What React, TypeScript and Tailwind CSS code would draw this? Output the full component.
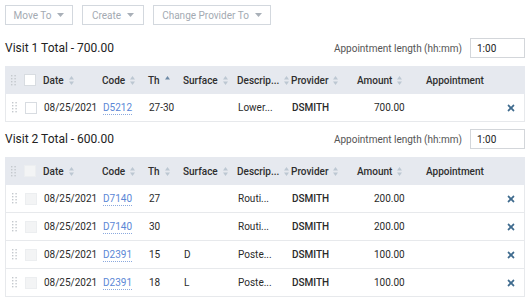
import { FC } from "react";
import { FaTimes } from "react-icons/fa";

interface Line {
  date: string;
  code: string;
  th: string;
  surface: string;
  desc: string;
  provider: string;
  amount: string;
}

const visits: { title: string; disabled: boolean; lines: Line[] }[] = [
  {
    title: "Visit 1 Total - 700.00",
    disabled: false,
    lines: [
      { date: "08/25/2021", code: "D5212", th: "27-30", surface: "", desc: "Lower...", provider: "DSMITH", amount: "700.00" },
    ],
  },
  {
    title: "Visit 2 Total - 600.00",
    disabled: true,
    lines: [
      { date: "08/25/2021", code: "D7140", th: "27", surface: "", desc: "Routi...", provider: "DSMITH", amount: "200.00" },
      { date: "08/25/2021", code: "D7140", th: "30", surface: "", desc: "Routi...", provider: "DSMITH", amount: "200.00" },
      { date: "08/25/2021", code: "D2391", th: "15", surface: "D", desc: "Poste...", provider: "DSMITH", amount: "100.00" },
      { date: "08/25/2021", code: "D2391", th: "18", surface: "L", desc: "Poste...", provider: "DSMITH", amount: "100.00" },
    ],
  },
];

const cols = "grid grid-cols-[15px_23px_59px_46px_35px_54px_54px_66px_69px_74px_25px]";

const Caret = () => (
  <svg width="7" height="4" viewBox="0 0 7 4" className="ml-[6px]">
    <path d="M0 0h7L3.5 4z" fill="#a9b0b8" />
  </svg>
);

const Sort: FC<{ active?: boolean }> = ({ active }) => (
  <svg width="5" height="9" viewBox="0 0 5 9" className="ml-[5px] mt-[1px]">
    <path d="M2.5 0L5 3.5H0z" fill={active ? "#6e8aa6" : "#bcc7d2"} />
    {!active && <path d="M0 5.5h5L2.5 9z" fill="#bcc7d2" />}
  </svg>
);

const Grip = () => (
  <svg width="5" height="11" viewBox="0 0 5 11" className="ml-[6px]">
    {[0, 3, 6, 9].map((y) => (
      <g key={y}>
        <rect x="0" y={y} width="1.4" height="1.4" fill="#c4c8cd" />
        <rect x="3.4" y={y} width="1.4" height="1.4" fill="#c4c8cd" />
      </g>
    ))}
  </svg>
);

const Box: FC<{ disabled?: boolean }> = ({ disabled }) => (
  <div
    className={`w-[12px] h-[12px] ml-[4px] border ${
      disabled ? "bg-[#f3f4f5] border-[#eceef0]" : "bg-white border-[#d8dce1]"
    }`}
  ></div>
);

const Head: FC<{ label: string; sort?: boolean; active?: boolean }> = ({ label, sort = true, active }) => (
  <div className="flex items-center">
    <span>{label}</span>
    {sort && <Sort active={active} />}
  </div>
);

const Button: FC<{ label: string; w: string }> = ({ label, w }) => (
  <div className={`${w} h-[20px] flex items-center justify-center border border-[#d3d8de] text-[10px] text-[#a3aab2]`}>
    {label}
    <Caret />
  </div>
);

export default function App() {
  return (
    <div className="w-[531px] h-[298px] overflow-hidden bg-white px-[5px] pt-[5px] font-['Roboto',sans-serif] text-[#333]">
      <div className="flex gap-[9px]">
        <Button label="Move To" w="w-[68px]" />
        <Button label="Create" w="w-[62px]" />
        <Button label="Change Provider To" w="w-[118px]" />
      </div>

      {visits.map((v, vIdx) => (
        <div key={`visit-${vIdx}`} className={vIdx === 0 ? "mt-[13px]" : "mt-[7px]"}>
          <div className="flex items-center justify-between h-[20px] w-[520px]">
            <span className="text-[12px] text-[#222]">{v.title}</span>
            <div className="flex items-center">
              <span className="text-[10px] text-[#555]">Appointment length (hh:mm)</span>
              <div className="ml-[8px] w-[55px] h-[20px] border border-[#d3d6da] text-[10px] text-[#222] flex items-center pl-[6px]">
                1:00
              </div>
            </div>
          </div>

          <div className="w-[520px] mt-[8px]">
            <div className={`${cols} h-[28px] items-center bg-[#e6e9ef] text-[10px] font-medium text-[#2e2e2e]`}>
              <Grip />
              <Box disabled={v.disabled} />
              <Head label="Date" />
              <Head label="Code" />
              <Head label="Th" active={!v.disabled} />
              <Head label="Surface" />
              <Head label="Descrip..." />
              <Head label="Provider" />
              <Head label="Amount" />
              <Head label="Appointment" sort={false} />
              <div></div>
            </div>
            {v.lines.map((l, lIdx) => (
              <div
                key={`${vIdx}-line-${lIdx}`}
                className={`${cols} h-[28px] items-center text-[10px] text-[#2a2a2a] border-x border-b border-[#e7e9ec]`}
              >
                <Grip />
                <Box disabled={v.disabled} />
                <span>{l.date}</span>
                <span className="text-[#5b87d6] underline decoration-dotted underline-offset-[3px] decoration-[#8ba9de] w-fit">{l.code}</span>
                <span>{l.th}</span>
                <span>{l.surface}</span>
                <span>{l.desc}</span>
                <span className="font-medium">{l.provider}</span>
                <span className="pl-[16px]">{l.amount}</span>
                <span></span>
                <FaTimes className="text-[#3f6b8e] ml-[5px]" size={10} />
              </div>
            ))}
          </div>
        </div>
      ))}
    </div>
  );
}
